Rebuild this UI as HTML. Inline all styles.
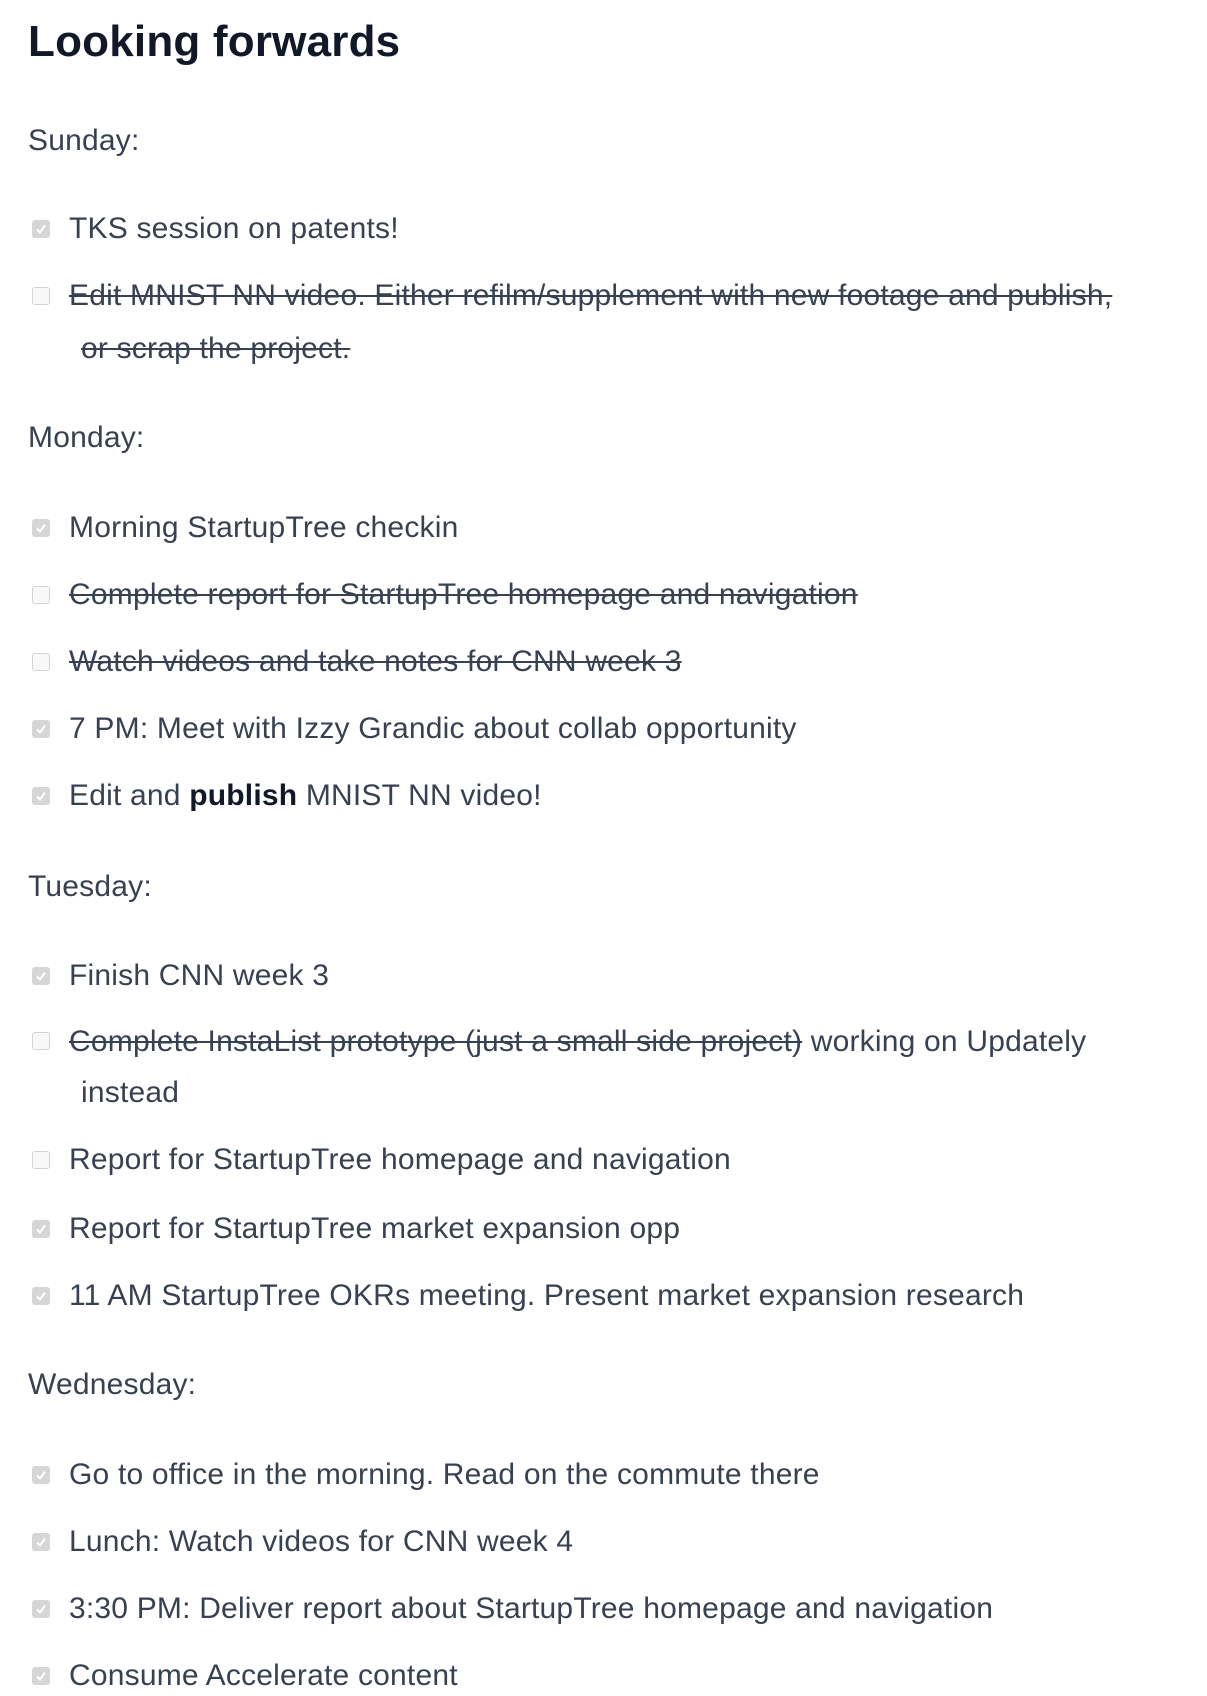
<!DOCTYPE html>
<html><head><meta charset="utf-8"><style>
html,body{margin:0;padding:0;background:#fff;}
body{width:1207px;height:1693px;position:relative;overflow:hidden;font-family:"Liberation Sans",sans-serif;color:#374151;}
.t{position:absolute;left:28px;font-size:30px;letter-spacing:0.2px;line-height:40px;height:40px;white-space:nowrap;}
.i{left:69px;}
.w{left:81px;}
h1{position:absolute;left:28px;top:14px;margin:0;font-size:44px;line-height:56px;font-weight:bold;color:#111827;letter-spacing:0.2px;}
.s{text-decoration:line-through;text-decoration-thickness:2px;text-decoration-color:#374151;}
b{color:#111827;}
.cb{position:absolute;left:32px;width:18px;height:18px;box-sizing:border-box;border-radius:3px;}
.c{background:#d6d6d6;}
.u{background:#f8f8f8;border:1px solid #d4d4d4;}
.c svg{position:absolute;left:3px;top:3px;}
</style></head><body>
<h1>Looking forwards</h1>
<div class="t" style="top:121px">Sunday:</div>

<div class="cb c" style="top:220px"><svg width="12" height="12" viewBox="0 0 12 12"><path d="M2 6.5L5 9.5L10 2.5" stroke="#fff" stroke-width="2" fill="none"/></svg></div>
<div class="t i" style="top:209px">TKS session on patents!</div>
<div class="cb u" style="top:287px"></div>
<div class="t i" style="top:276px"><span class="s">Edit MNIST NN video. Either refilm/supplement with new footage and publish,</span></div>
<div class="t w" style="top:329px"><span class="s">or scrap the project.</span></div>

<div class="t" style="top:418px">Monday:</div>
<div class="cb c" style="top:519px"><svg width="12" height="12" viewBox="0 0 12 12"><path d="M2 6.5L5 9.5L10 2.5" stroke="#fff" stroke-width="2" fill="none"/></svg></div>
<div class="t i" style="top:508px">Morning StartupTree checkin</div>
<div class="cb u" style="top:586px"></div>
<div class="t i" style="top:575px"><span class="s">Complete report for StartupTree homepage and navigation</span></div>
<div class="cb u" style="top:653px"></div>
<div class="t i" style="top:642px"><span class="s">Watch videos and take notes for CNN week 3</span></div>
<div class="cb c" style="top:720px"><svg width="12" height="12" viewBox="0 0 12 12"><path d="M2 6.5L5 9.5L10 2.5" stroke="#fff" stroke-width="2" fill="none"/></svg></div>
<div class="t i" style="top:709px">7 PM: Meet with Izzy Grandic about collab opportunity</div>
<div class="cb c" style="top:787px"><svg width="12" height="12" viewBox="0 0 12 12"><path d="M2 6.5L5 9.5L10 2.5" stroke="#fff" stroke-width="2" fill="none"/></svg></div>
<div class="t i" style="top:776px">Edit and <b>publish</b> MNIST NN video!</div>

<div class="t" style="top:867px">Tuesday:</div>
<div class="cb c" style="top:967px"><svg width="12" height="12" viewBox="0 0 12 12"><path d="M2 6.5L5 9.5L10 2.5" stroke="#fff" stroke-width="2" fill="none"/></svg></div>
<div class="t i" style="top:956px">Finish CNN week 3</div>
<div class="cb u" style="top:1032px"></div>
<div class="t i" style="top:1022px"><span class="s">Complete InstaList prototype (just a small side project)</span> working on Updately</div>
<div class="t w" style="top:1073px">instead</div>
<div class="cb u" style="top:1151px"></div>
<div class="t i" style="top:1140px">Report for StartupTree homepage and navigation</div>
<div class="cb c" style="top:1220px"><svg width="12" height="12" viewBox="0 0 12 12"><path d="M2 6.5L5 9.5L10 2.5" stroke="#fff" stroke-width="2" fill="none"/></svg></div>
<div class="t i" style="top:1209px">Report for StartupTree market expansion opp</div>
<div class="cb c" style="top:1287px"><svg width="12" height="12" viewBox="0 0 12 12"><path d="M2 6.5L5 9.5L10 2.5" stroke="#fff" stroke-width="2" fill="none"/></svg></div>
<div class="t i" style="top:1276px">11 AM StartupTree OKRs meeting. Present market expansion research</div>

<div class="t" style="top:1365px">Wednesday:</div>
<div class="cb c" style="top:1466px"><svg width="12" height="12" viewBox="0 0 12 12"><path d="M2 6.5L5 9.5L10 2.5" stroke="#fff" stroke-width="2" fill="none"/></svg></div>
<div class="t i" style="top:1455px">Go to office in the morning. Read on the commute there</div>
<div class="cb c" style="top:1533px"><svg width="12" height="12" viewBox="0 0 12 12"><path d="M2 6.5L5 9.5L10 2.5" stroke="#fff" stroke-width="2" fill="none"/></svg></div>
<div class="t i" style="top:1522px">Lunch: Watch videos for CNN week 4</div>
<div class="cb c" style="top:1600px"><svg width="12" height="12" viewBox="0 0 12 12"><path d="M2 6.5L5 9.5L10 2.5" stroke="#fff" stroke-width="2" fill="none"/></svg></div>
<div class="t i" style="top:1589px">3:30 PM: Deliver report about StartupTree homepage and navigation</div>
<div class="cb c" style="top:1667px"><svg width="12" height="12" viewBox="0 0 12 12"><path d="M2 6.5L5 9.5L10 2.5" stroke="#fff" stroke-width="2" fill="none"/></svg></div>
<div class="t i" style="top:1656px">Consume Accelerate content</div>
</body></html>
